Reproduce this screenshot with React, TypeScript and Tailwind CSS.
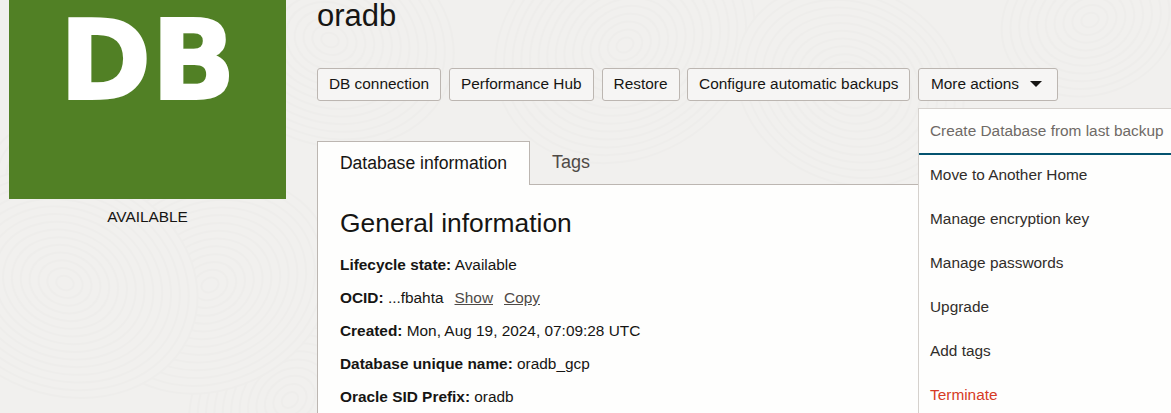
const font = { fontFamily: '"Liberation Sans", Arial, sans-serif' };

const actions = [
    { label: 'DB connection', width: 'w-[124px]' },
    { label: 'Performance Hub', width: 'w-[145px]' },
    { label: 'Restore', width: 'w-[78px]' },
    { label: 'Configure automatic backups', width: 'w-[223px]' },
];
const menuItems = ['Move to Another Home', 'Manage encryption key', 'Manage passwords', 'Upgrade', 'Add tags'];

// faint fingerprint-like swirls behind the page
function Swirls() {
    const rings = [
        { cx: 330, cy: 40, count: 14, rot: 20 },
        { cx: 625, cy: 45, count: 15, rot: -30 },
        { cx: 850, cy: 85, count: 13, rot: 25 },
        { cx: 1090, cy: 20, count: 10, rot: -20 },
        { cx: 60, cy: 180, count: 8, rot: 10 },
        { cx: 290, cy: 400, count: 12, rot: -40 },
        { cx: 210, cy: 285, count: 14, rot: -25 },
        { cx: 65, cy: 283, count: 15, rot: 20 },
    ];
    return (
        <svg className="absolute inset-0 w-full h-full" viewBox="0 0 1171 413" stroke="#eeedeb" strokeWidth="2">
            {rings.map(r =>
                Array.from({ length: r.count }, (_, i) => r.count - 1 - i).map(i => (
                    <ellipse key={`${r.cx}-${i}`} cx={r.cx} cy={r.cy} rx={9 + i * 9} ry={7 + i * 7.5} fill="#f1f0ee" transform={`rotate(${r.rot} ${r.cx} ${r.cy})`} />
                ))
            )}
        </svg>
    );
}

function ActionButton({ label, width, caret }: { label: string; width: string; caret?: boolean }) {
    return (
        <button className={`${width} h-[33px] pb-[1px] flex items-center justify-center bg-[#f6f5f4] border border-[#bcb6b1] rounded-[3px] text-[15.4px] text-[#161513] whitespace-nowrap`}>
            {label}
            {caret && <span className="ml-[11px] mr-[3px] w-0 h-0 border-x-[6px] border-x-transparent border-t-[6px] border-t-[#161513]" />}
        </button>
    );
}

function InfoRow({ label, children }: { label: string; children: React.ReactNode }) {
    return (
        <p className="h-[33px] leading-[33px] text-[15.4px] text-[#161513] whitespace-nowrap">
            <span className="font-bold">{label}</span> {children}
        </p>
    );
}

export default function App() {
    return (
        <div style={font} className="relative w-[1171px] h-[413px] overflow-hidden bg-[#f1f0ee]">
            <Swirls />
            <div className="relative flex h-full">
                <div className="w-[277px] ml-[9px] mr-[31px] shrink-0">
                    <div className="h-[199px] bg-[#518025] flex justify-center">
                        <span style={{ fontFamily: '"DejaVu Sans", sans-serif' }} className="font-bold text-[111px] leading-[121px] text-white [-webkit-text-stroke:2px_white]">DB</span>
                    </div>
                    <p className="mt-[6px] text-center text-[15.4px] text-[#161513]">AVAILABLE</p>
                </div>

                <div className="flex-1 min-w-0">
                    <h1 className="text-[31px] leading-[31px] text-[#161513]">oradb</h1>
                    <div className="mt-[37px] flex gap-[7.75px]">
                        {actions.map(a => <ActionButton key={a.label} label={a.label} width={a.width} />)}
                        <ActionButton label="More actions" width="w-[140px]" caret />
                    </div>

                    <div className="mt-[40px] h-[44px] flex border-b border-[#bcb6b1]">
                        <div className="w-[213px] h-[44px] border border-b-0 border-[#bcb6b1] bg-[#fefefd] flex items-center justify-center text-[17.6px] text-[#161513]">Database information</div>
                        <div className="ml-[22px] h-[43px] flex items-center text-[18px] text-[#4f4a46]">Tags</div>
                    </div>
                    <div className="h-[300px] bg-[#fefefd] border-l border-[#bcb6b1] pl-[22px] pt-[20px]">
                        <h2 className="text-[26.4px] leading-[36px] text-[#161513] mb-[7px]">General information</h2>
                        <InfoRow label="Lifecycle state:">Available</InfoRow>
                        <InfoRow label="OCID:">
                            ...fbahta
                            <a className="ml-[11px] underline text-[#4f4a46]">Show</a>
                            <a className="ml-[11px] underline text-[#4f4a46]">Copy</a>
                        </InfoRow>
                        <InfoRow label="Created:">Mon, Aug 19, 2024, 07:09:28 UTC</InfoRow>
                        <InfoRow label="Database unique name:">oradb_gcp</InfoRow>
                        <InfoRow label="Oracle SID Prefix:">oradb</InfoRow>
                    </div>
                </div>
            </div>

            <div className="absolute left-[918px] top-[108px] w-[270px] h-[320px] bg-[#fefefd] border border-[#d5d1cd] text-[15.4px] whitespace-nowrap">
                <div className="h-[46px] pl-[11px] flex items-center border-b-2 border-[#04536f] text-[#6f6a66]">Create Database from last backup</div>
                <div className="-mt-[2px]">
                    {menuItems.map(m => (
                        <div key={m} className="h-[44px] pl-[11px] flex items-center text-[#312d2a]">{m}</div>
                    ))}
                    <div className="h-[44px] pl-[11px] flex items-center text-[#d63b25]">Terminate</div>
                </div>
            </div>
        </div>
    );
}
